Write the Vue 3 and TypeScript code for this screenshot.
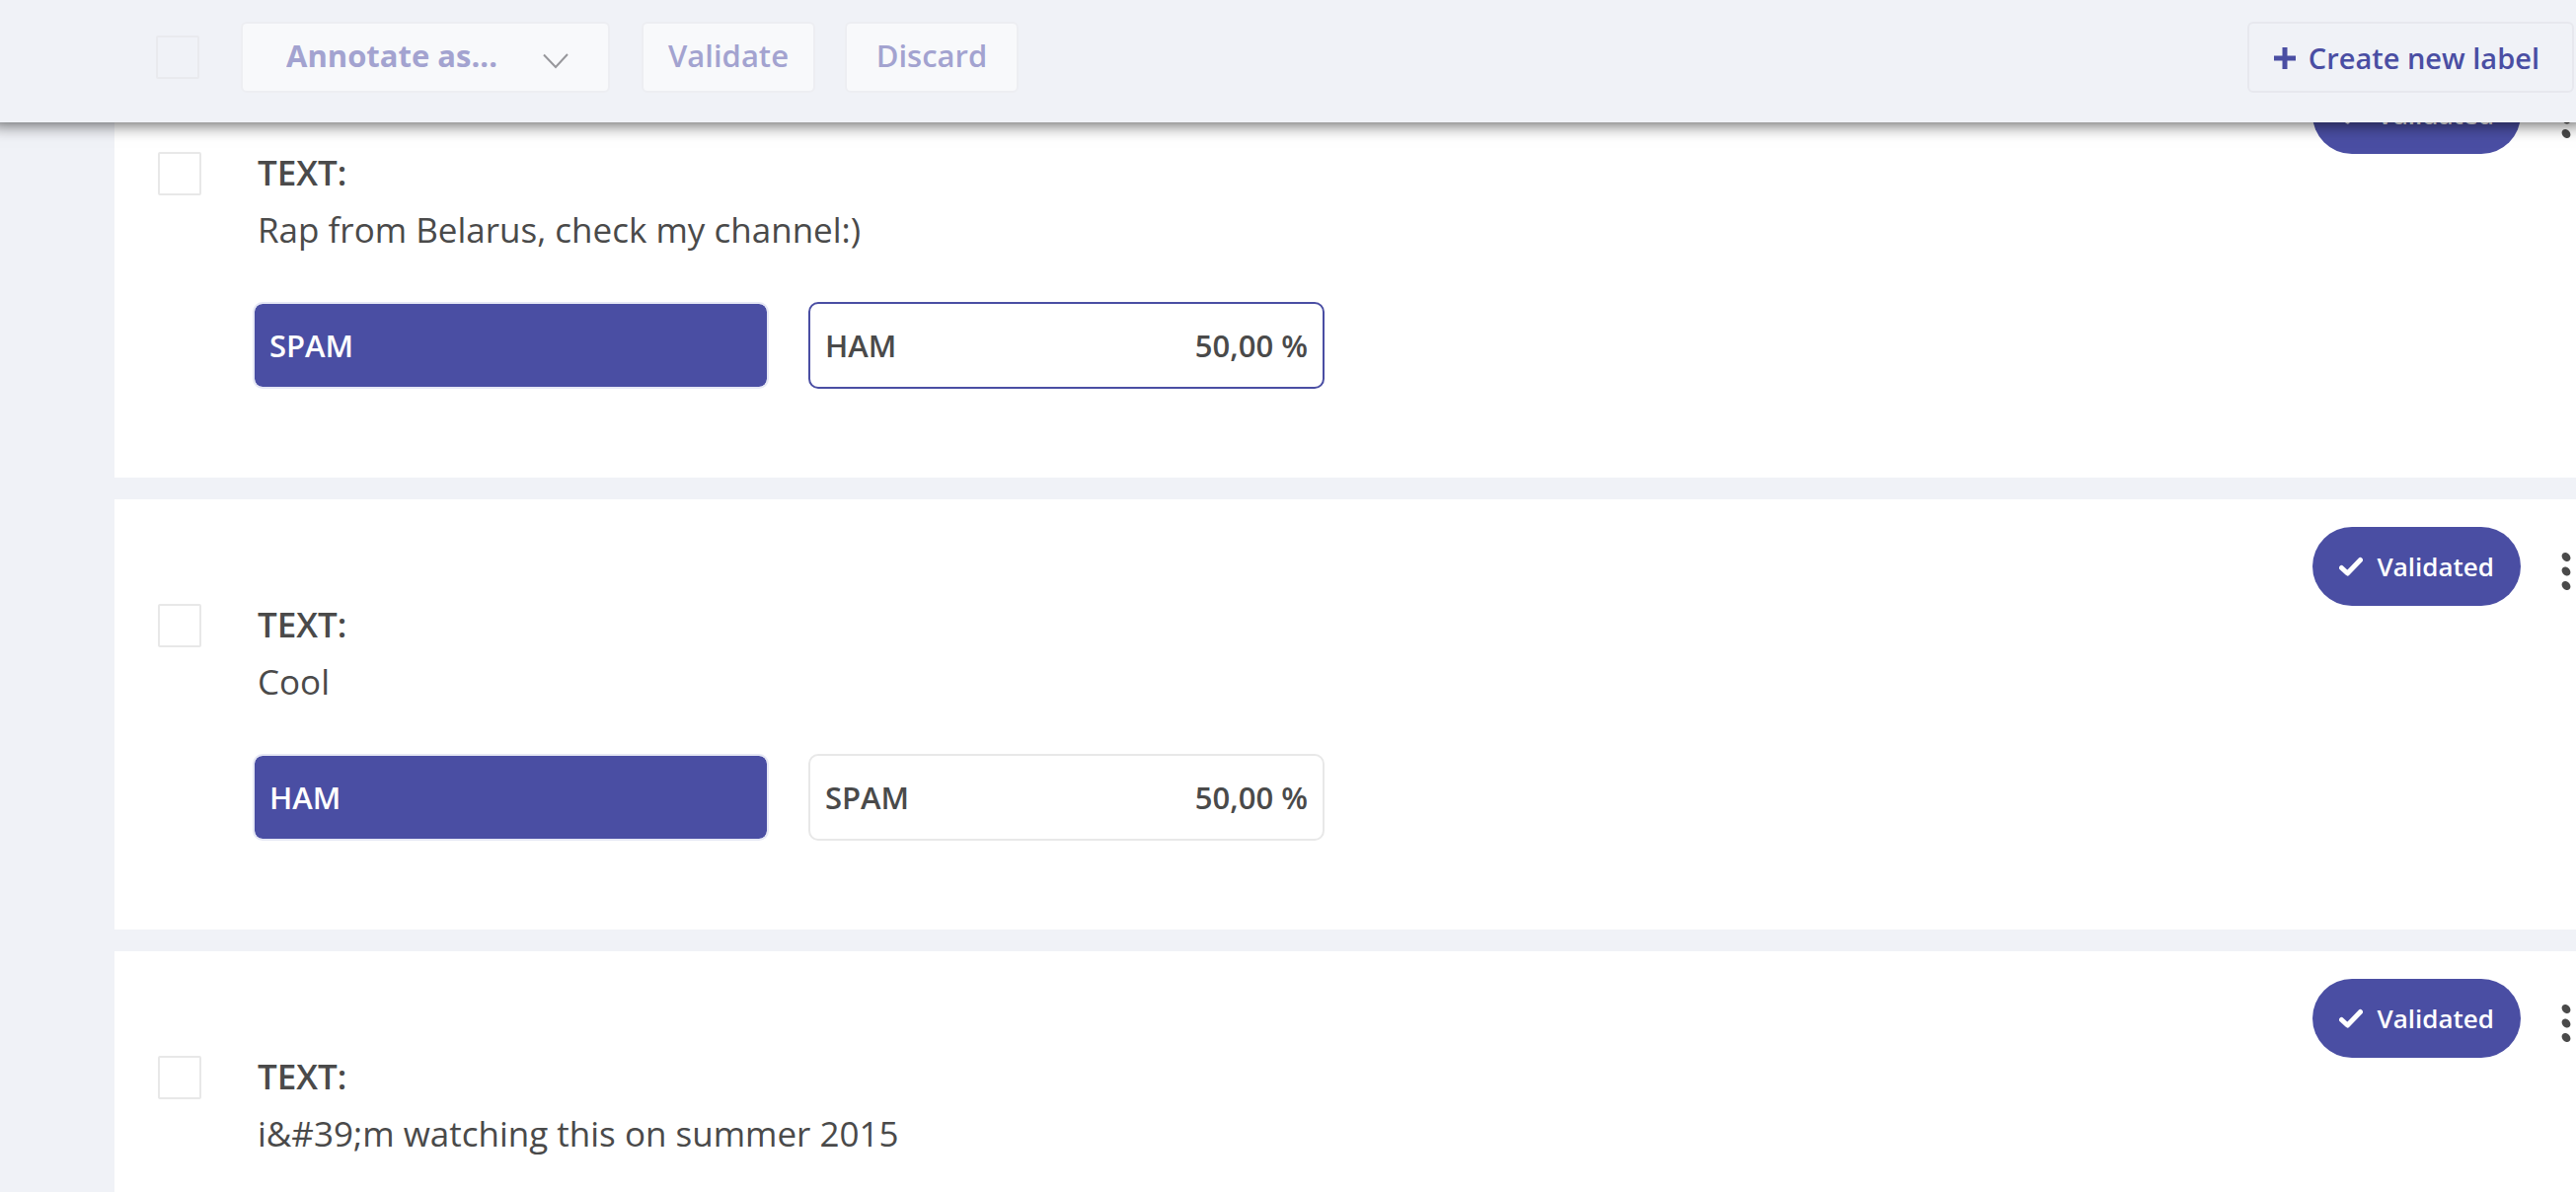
<script setup lang="ts">
interface Label {
  name: string
  score?: string
  kind: 'selected' | 'predicted' | 'plain'
}

interface TextRecord {
  id: number
  text: string
  labels: Label[]
}

const records: TextRecord[] = [
  {
    id: 1,
    text: 'Rap from Belarus, check my channel:)',
    labels: [
      { name: 'SPAM', kind: 'selected' },
      { name: 'HAM', score: '50,00 %', kind: 'predicted' },
    ],
  },
  {
    id: 2,
    text: 'Cool',
    labels: [
      { name: 'HAM', kind: 'selected' },
      { name: 'SPAM', score: '50,00 %', kind: 'plain' },
    ],
  },
  { id: 3, text: 'i&#39;m watching this on summer 2015', labels: [] },
]
</script>

<template>
  <div class="page">
    <header class="toolbar">
      <input class="check" type="checkbox" disabled aria-label="Select all records" />
      <div class="annotate">
        <select class="control annotate-select" disabled aria-label="Annotate as">
          <option>Annotate as...</option>
        </select>
        <svg class="chevron" viewBox="0 0 26 16" aria-hidden="true">
          <path d="M1 1.5 L13 14 L25 1" fill="none" stroke="#97979b" stroke-width="2" />
        </svg>
      </div>
      <button class="control action" type="button" disabled>Validate</button>
      <button class="control action" type="button" disabled>Discard</button>
      <button class="control create" type="button">
        <svg class="plus" viewBox="0 0 22 22" aria-hidden="true">
          <path d="M11 0V22M0 11H22" fill="none" stroke="currentColor" stroke-width="5" />
        </svg>
        Create new label
      </button>
    </header>

    <main class="records">
      <article v-for="record in records" :key="record.id" class="card">
        <input
          class="check card-check"
          type="checkbox"
          :aria-label="`Select record ${record.id}`"
        />
        <div class="content">
          <h2 class="field">TEXT:</h2>
          <p class="text">{{ record.text }}</p>
          <div v-if="record.labels.length" class="labels">
            <button
              v-for="label in record.labels"
              :key="label.name"
              type="button"
              class="label"
              :class="label.kind"
            >
              <span>{{ label.name }}</span>
              <span v-if="label.score">{{ label.score }}</span>
            </button>
          </div>
        </div>
        <div class="status">
          <span class="pill">
            <svg class="tick" viewBox="0 0 24 20" aria-hidden="true">
              <path
                d="M2.5 11.5 L8.5 17 L21.5 3.5"
                fill="none"
                stroke="currentColor"
                stroke-width="5"
                stroke-linecap="round"
                stroke-linejoin="round"
              />
            </svg>
            Validated
          </span>
          <button class="more" type="button" aria-label="More options">
            <svg class="dots" viewBox="0 0 10 40" aria-hidden="true">
              <g fill="#4a4a4a">
                <ellipse cx="5" cy="5.5" rx="5" ry="4" transform="rotate(50 5 5.5)" />
                <ellipse cx="5" cy="20" rx="5" ry="4" transform="rotate(50 5 20)" />
                <ellipse cx="5" cy="34.5" rx="5" ry="4" transform="rotate(50 5 34.5)" />
              </g>
            </svg>
          </button>
        </div>
      </article>
    </main>
  </div>
</template>

<style>
body {
  margin: 0;
  background: #f0f2f7;
}
</style>

<style scoped>
.page {
  height: 100vh;
  overflow: hidden;
  background: #f0f2f7;
  color: #4a4a4a;
  font-family: 'Open Sans', 'Noto Sans', sans-serif;
}

.toolbar {
  position: relative;
  z-index: 1;
  display: flex;
  align-items: center;
  box-sizing: border-box;
  height: 124px;
  padding: 0 2px 8px 158px;
  background: #f0f2f7;
  box-shadow: 0 -8px 16px 10px rgba(0, 0, 0, 0.65);
}

.check {
  appearance: none;
  flex: none;
  box-sizing: border-box;
  width: 44px;
  height: 44px;
  margin: 0;
  border: 2px solid #e9eaee;
  border-radius: 2px;
}

.control {
  box-sizing: border-box;
  height: 72px;
  border: 2px solid #edeef2;
  border-radius: 6px;
  font-family: inherit;
  font-size: 31px;
  font-weight: 600;
  opacity: 1;
}

.annotate {
  position: relative;
  margin: 0 32px 0 42px;
}

.annotate-select {
  appearance: none;
  display: block;
  width: 374px;
  padding: 0 0 4px 44px;
  background: #f8f9fb;
  color: #a3a3d0;
  font-weight: 700;
}

.chevron {
  position: absolute;
  top: 32px;
  right: 42px;
  width: 26px;
  height: 16px;
}

.action {
  width: 176px;
  margin-right: 30px;
  padding: 0 0 4px;
  background: #f8f9fb;
  color: #a3a3d0;
}

.create {
  display: flex;
  align-items: center;
  gap: 13px;
  margin-left: auto;
  padding: 1px 33px 0 25px;
  border-color: #e7e8ee;
  background: transparent;
  color: #4a4ea3;
  font-size: 29px;
}

.plus {
  width: 22px;
  height: 22px;
}

.records {
  display: flex;
  flex-direction: column;
  gap: 22px;
  margin: -76px 0 0 116px;
}

.card {
  display: flex;
  align-items: flex-start;
  background: #fff;
}

.card-check {
  margin: 106px 52px 0 44px;
  border-color: #e8e8e8;
}

.content {
  flex: 1;
  padding: 98px 0 90px;
}

.field,
.text {
  margin: 0;
  padding-left: 5px;
  font-size: 35px;
  line-height: 58px;
}

.field {
  font-weight: 600;
}

.text {
  font-weight: 400;
}

.labels {
  display: flex;
  gap: 40px;
  margin-top: 44px;
}

.label {
  display: flex;
  align-items: center;
  justify-content: space-between;
  box-sizing: border-box;
  width: 523px;
  height: 88px;
  padding: 0 15px;
  border: 2px solid #e8e8e8;
  border-radius: 10px;
  background: #fff;
  color: #4a4a4a;
  font-family: inherit;
  font-size: 31px;
  font-weight: 600;
}

.label.selected {
  border-color: #e6e8f5;
  background: #4a4ea3;
  background-clip: padding-box;
  color: #fff;
}

.label.predicted {
  border-color: #4a4ea3;
}

.status {
  display: flex;
  align-items: center;
  gap: 41px;
  padding: 28px 5px 0 0;
}

.pill {
  display: flex;
  align-items: center;
  gap: 15px;
  box-sizing: border-box;
  height: 80px;
  padding: 0 27px;
  border-radius: 40px;
  background: #4a4ea3;
  color: #fff;
  font-size: 26px;
  font-weight: 600;
}

.tick {
  width: 24px;
  height: 20px;
}

.more {
  padding: 10px 0 0;
  border: 0;
  background: none;
}

.dots {
  display: block;
  width: 10px;
  height: 40px;
}
</style>
